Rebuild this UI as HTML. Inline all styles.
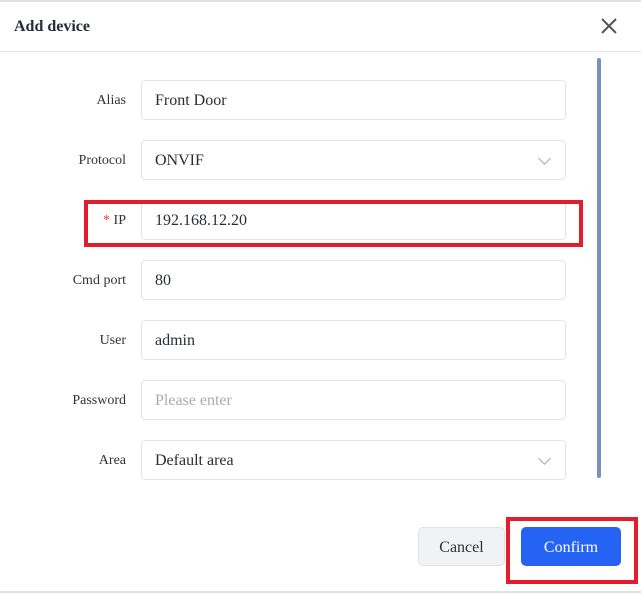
<!DOCTYPE html><html><head><style>
body{margin:0;width:641px;height:597px;background:#fff;font-family:"Liberation Serif","Times New Roman","DejaVu Serif",serif;position:relative;overflow:hidden}
.a{position:absolute}
.lbl{position:absolute;right:515px;font-size:14px;color:#333;line-height:16px}
.in{position:absolute;left:141px;border:1px solid #e3e5ea;border-radius:4px;font-size:16px;color:#2a2d3a;line-height:40px;padding-left:13px;box-sizing:border-box;width:425px;height:40px}
.chev{position:absolute;right:16px;top:13px;width:8px;height:8px;border-right:1px solid #aaa;border-bottom:1px solid #aaa;transform:rotate(45deg)}
</style></head><body>
<div class="a" style="left:0;top:0;width:641px;height:2px;background:#dfe1e6"></div>
<div class="a" style="left:14px;top:18px;font-size:16px;font-weight:bold;color:#252a3d">Add device</div>
<svg class="a" style="left:600px;top:17px" width="18" height="18"><path d="M2 2L16 16M16 2L2 16" stroke="#555" stroke-width="2"/></svg>
<div class="a" style="left:0;top:51px;width:641px;height:1px;background:#e6e7eb"></div>
<div class="a" style="left:597px;top:58px;width:4px;height:420px;background:#7593b8;border-radius:2px"></div>

<div class="lbl" style="top:93px">Alias</div><div class="in" style="top:80px">Front Door</div>
<div class="lbl" style="top:153px">Protocol</div><div class="in" style="top:140px">ONVIF<div class="chev"></div></div>
<div class="lbl" style="top:213px"><span style="color:#e33">*</span> IP</div><div class="in" style="top:200px">192.168.12.20</div>
<div class="lbl" style="top:273px">Cmd port</div><div class="in" style="top:260px">80</div>
<div class="lbl" style="top:333px">User</div><div class="in" style="top:320px">admin</div>
<div class="lbl" style="top:393px">Password</div><div class="in" style="top:380px;color:#a8abb2">Please enter</div>
<div class="lbl" style="top:453px">Area</div><div class="in" style="top:440px">Default area<div class="chev"></div></div>

<div class="a" style="left:84px;top:200px;width:491px;height:39px;border:4px solid #e21e2c"></div>

<div class="a" style="left:418px;top:527px;width:87px;height:39px;background:#f1f2f4;border:1px solid #e0e2e6;border-radius:5px;box-sizing:border-box;text-align:center;line-height:39px;font-size:16px;color:#333">Cancel</div>
<div class="a" style="left:521px;top:527px;width:100px;height:39px;background:#2563f5;border-radius:5px;text-align:center;line-height:41px;font-size:16px;color:#fff">Confirm</div>
<div class="a" style="left:506px;top:517px;width:124px;height:59px;border:4px solid #e21e2c"></div>
<div class="a" style="left:0;top:591px;width:641px;height:2px;background:#dfe1e6"></div>
</body></html>
